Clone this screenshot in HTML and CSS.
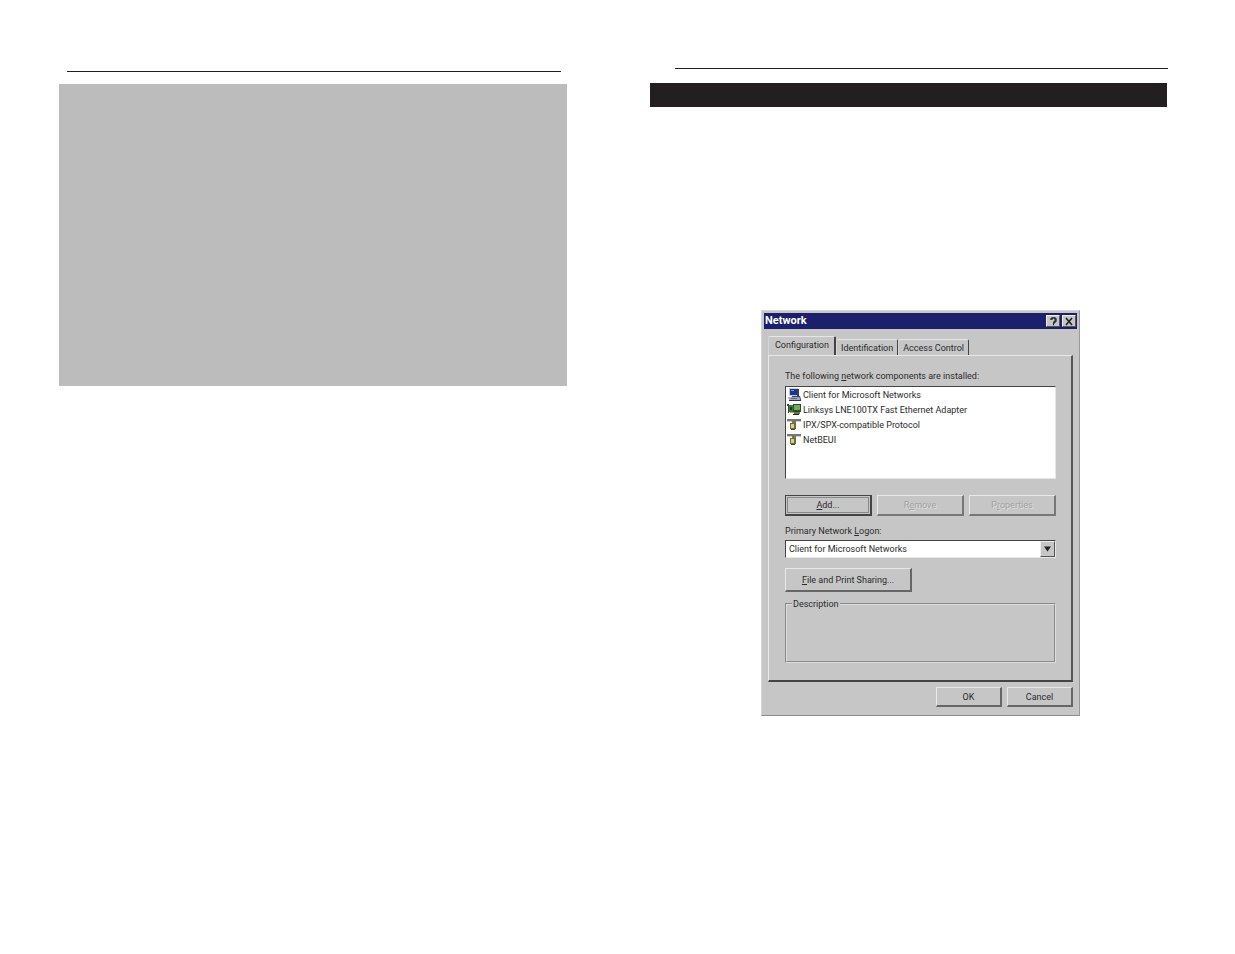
FILE: index.html
```html
<!DOCTYPE html>
<html lang="en">
<head>
<meta charset="utf-8">
<title>Network</title>
<link rel="stylesheet" href="styles.css">
</head>
<body>
<div class="spread">

	<section class="page page-left">
		<hr class="rule">
		<div class="note"></div>
	</section>

	<section class="page page-right">
		<hr class="rule">
		<div class="heading-bar"></div>

		<form class="dialog" role="dialog" aria-labelledby="title">
			<div class="titlebar">
				<h1 id="title">Network</h1>
				<button type="button" class="tool" aria-label="Help">
					<svg viewBox="0 0 10 9"><path d="M3 3V2h1V1h3v1h1v2H7v1H6v1H5M5 7.500h1" fill="none" stroke="#222" stroke-width="1.300"/></svg>
				</button>
				<button type="button" class="tool" aria-label="Close">
					<svg viewBox="0 0 10 9"><path d="M2 1l6 7M8 1L2 8" fill="none" stroke="#222" stroke-width="1.600"/></svg>
				</button>
			</div>

			<div class="tabs" role="tablist">
				<button type="button" class="tab active" role="tab" aria-selected="true">Configuration</button>
				<button type="button" class="tab" role="tab">Identification</button>
				<button type="button" class="tab" role="tab">Access Control</button>
			</div>

			<div class="panel" role="tabpanel">
				<p class="caption" id="installed">The following <u>n</u>etwork components are installed:</p>
				<ul class="components" role="listbox" aria-labelledby="installed">
					<li role="option">
						<svg class="icon" viewBox="0 0 14 13"><path d="M2 0h9v8H2z" fill="#c4cae0"/><path d="M3 1h7v6H3z" fill="#20348c"/><path d="M4 2h3v1H4z" fill="#7f96dc"/><path d="M10 1h2v8H5V8h5z" fill="#39405e"/><path d="M1 9h11l1 3H2z" fill="#a4a9bc"/><path d="M2 12h12v1H2zM12 8h1l1 4h-1z" fill="#2c3250"/><path d="M4 10h6v1H4z" fill="#5a6590"/></svg>
						Client for Microsoft Networks
					</li>
					<li role="option">
						<svg class="icon" viewBox="0 0 14 13"><path d="M0 1h2v9H1V3H0z" fill="#444"/><path d="M2 2h6v7H2z" fill="#3d7a36"/><path d="M3 4h2v3H3z" fill="#1e3a1c"/><path d="M3 9h5v1H3z" fill="#b6a83e"/><path d="M6 1h8v8H6z" fill="#2f4a2c"/><path d="M7 2h6v5H7z" fill="#77a860"/><path d="M7 9h6v2H7z" fill="#65754e"/><path d="M6 11h6v1H6z" fill="#222"/></svg>
						Linksys LNE100TX Fast Ethernet Adapter
					</li>
					<li role="option">
						<svg class="icon" viewBox="0 0 14 13"><path d="M0 1h14v2H0z" fill="#777"/><path d="M0 3h14v1H0z" fill="#ccc"/><path d="M5 3h4v4H5z" fill="#77775a"/><path d="M3 5h6v6H3z" fill="#6f6d35"/><path d="M4 6h3v4H4z" fill="#d7d18b"/><path d="M4 11h4v1H4z" fill="#444"/></svg>
						IPX/SPX-compatible Protocol
					</li>
					<li role="option">
						<svg class="icon" viewBox="0 0 14 13"><path d="M0 1h14v2H0z" fill="#777"/><path d="M0 3h14v1H0z" fill="#ccc"/><path d="M5 3h4v4H5z" fill="#77775a"/><path d="M3 5h6v6H3z" fill="#6f6d35"/><path d="M4 6h3v4H4z" fill="#d7d18b"/><path d="M4 11h4v1H4z" fill="#444"/></svg>
						NetBEUI
					</li>
				</ul>

				<div class="actions">
					<button type="button" class="btn default"><span><u>A</u>dd...</span></button>
					<button type="button" class="btn" disabled>R<u>e</u>move</button>
					<button type="button" class="btn" disabled>P<u>r</u>operties</button>
				</div>

				<label class="caption" for="logon">Primary Network <u>L</u>ogon:</label>
				<div class="combo">
					<select id="logon">
						<option>Client for Microsoft Networks</option>
					</select>
					<svg class="arrow" viewBox="0 0 13 13"><path d="M3 4h7L6.500 9z" fill="#222"/></svg>
				</div>

				<button type="button" class="btn sharing"><u>F</u>ile and Print Sharing...</button>

				<fieldset class="group">
					<legend>Description</legend>
				</fieldset>
			</div>

			<div class="footer">
				<button type="button" class="btn">OK</button>
				<button type="button" class="btn">Cancel</button>
			</div>
		</form>
	</section>

</div>
</body>
</html>
```

FILE: styles.css
```css
* {
	box-sizing: border-box;
}
body {
	margin: 0;
	background: #fff;
	font-family: Roboto, "Liberation Sans", Arial, sans-serif;
	font-size: 9px;
	line-height: 14px;
	color: #2b2b2b;
}
button, select {
	font: inherit;
	color: inherit;
	margin: 0;
	padding: 0;
	border-radius: 0;
}

/* two facing pages */
.spread {
	display: grid;
	grid-template-columns: 508fr 517fr;
	column-gap: 83px;
	padding: 0 68px 0 59px;
}
.rule {
	border: 0;
	height: 1px;
	background: #231f20;
}
.page-left .rule {
	margin: 71px 6px 12px 8px;
}
.page-right .rule {
	margin: 68px -1px 14px 25px;
}
.note {
	height: 302px;
	background: #bcbcbc;
}
.heading-bar {
	height: 24px;
	background: #231f20;
}

/* dialog */
.dialog {
	margin: 203px 87px 0 111px;
	padding: 2px 2px 8px;
	background: #c6c6c6;
	border: 1px solid;
	border-color: #d6d6d6 #999 #8c8c8c #d6d6d6;
}
.titlebar {
	display: flex;
	align-items: center;
	gap: 2px;
	height: 16px;
	padding: 0 1px;
	background: #1c1f6b;
	color: #fff;
}
.titlebar h1 {
	flex: 1;
	margin: 0;
	font-size: 11px;
	line-height: 16px;
}
.tool {
	width: 14px;
	height: 12px;
	background: #c6c6c6;
	border: 1px solid;
	border-color: #eee #555 #555 #eee;
}
.tool svg {
	display: block;
	width: 10px;
	height: 9px;
	margin: auto;
}

.tabs {
	display: flex;
	align-items: flex-end;
	margin: 7px 4px 0;
}
.tab {
	height: 16px;
	padding: 0 4px;
	background: none;
	border: 1px solid;
	border-color: #e6e6e6 #444 transparent #d6d6d6;
	border-bottom: 0;
	border-radius: 2px 2px 0 0;
}
.tab.active {
	height: 19px;
	padding: 0 5px 2px 6px;
	border-right-width: 2px;
}

.panel {
	margin: 0 4px;
	padding: 13px 15px 17px 16px;
	border: 1px solid;
	border-color: #e8e8e8 #555 #444 #e8e8e8;
	border-right-width: 2px;
	border-bottom-width: 2px;
}
.caption {
	display: block;
	margin: 0;
}
.components {
	height: 93px;
	margin: 3px 0 16px;
	padding: 0 1px;
	list-style: none;
	background: #fff;
	border: 1px solid;
	border-color: #444 #e6e6e6 #e6e6e6 #444;
}
.components li {
	display: flex;
	align-items: center;
	gap: 2px;
	height: 15px;
}
.icon {
	width: 14px;
	height: 13px;
}

.btn {
	background: #c6c6c6;
	border: 1px solid;
	border-color: #e8e8e8 #666 #666 #e8e8e8;
	border-right-width: 2px;
	border-bottom-width: 2px;
}
.btn:disabled {
	color: #a2a2a2;
	border-right-color: #777;
	border-bottom-color: #777;
	text-shadow: 1px 1px #dedede;
}
.btn.default {
	padding: 1px;
	border-color: #444;
}
.btn.default span {
	display: block;
	border: 1px solid #888;
}
.actions {
	display: grid;
	grid-template-columns: 1fr 1fr 1fr;
	gap: 5px;
	height: 21px;
	margin-bottom: 8px;
}

.combo {
	display: flex;
	height: 18px;
	margin: 2px 0 10px;
	background: #fff;
	border: 1px solid;
	border-color: #444 #e6e6e6 #e6e6e6 #444;
}
.combo select {
	flex: 1;
	padding: 0 3px;
	background: none;
	border: 0;
	appearance: none;
}
.arrow {
	width: 15px;
	height: 16px;
	background: #c6c6c6;
	border: 1px solid;
	border-color: #eee #555 #555 #eee;
	pointer-events: none;
}

.sharing {
	display: block;
	height: 24px;
	padding: 0 16px;
}
.group {
	height: 66px;
	margin: 5px 0 0;
	padding: 0 5px;
	border: 2px groove #ddd;
}
.group legend {
	padding: 0 1px;
}

.footer {
	display: flex;
	justify-content: flex-end;
	gap: 5px;
	margin: 5px 4px 0;
}
.footer .btn {
	width: 66px;
	height: 20px;
}
```
